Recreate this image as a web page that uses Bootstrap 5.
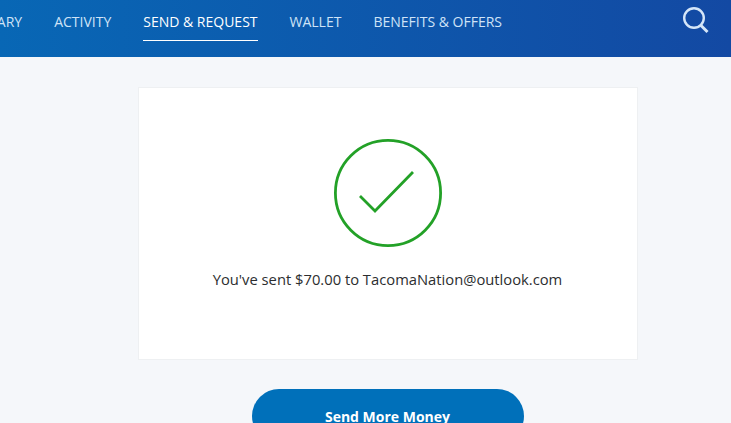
<!DOCTYPE html>
<html lang="en">
<head>
    <meta charset="UTF-8">
    <meta name="viewport" content="width=device-width, initial-scale=1.0">
    <title>Send Money</title>
    <link href="https://cdn.jsdelivr.net/npm/bootstrap@5.3.0/dist/css/bootstrap.min.css" rel="stylesheet">
    <style>
        html, body { height: 100%; overflow: hidden; }
        body {
            background-color: #f5f7fa;
            font-family: "Open Sans", "Noto Sans", sans-serif;
            color: #2c2e2f;
        }
        .top-bar {
            height: 57px;
            padding-right: 22px;
            background: linear-gradient(90deg, #0867b5 0%, #1349a3 100%);
            overflow: hidden;
        }
        .top-links { gap: 32px; margin-right: 181px; flex-shrink: 0; }
        .top-link {
            display: block;
            height: 41px;
            padding-top: 13px;
            font-size: 14px;
            line-height: 18px;
            color: #cfe3f7;
            text-decoration: none;
            white-space: nowrap;
        }
        .top-link.current { color: #fff; border-bottom: 1px solid #fff; }
        .search-icon { margin-top: 4px; flex-shrink: 0; }
        .page-body { padding-left: 44px; }
        .result-panel {
            width: 500px;
            height: 273px;
            margin: 30px auto 0;
            padding-top: 51px;
            background: #fff;
            border: 1px solid #eef0f2;
        }
        .result-text { margin: 21px 0 0; font-size: 14.75px; line-height: 22px; }
        .more-btn {
            width: 272px;
            height: 54px;
            margin: 29px auto 0;
            border-radius: 27px;
            background: #0070ba;
            color: #fff;
            font-size: 14px;
            font-weight: 700;
        }
        .more-btn:hover { background: #005ea6; color: #fff; }
    </style>
</head>
<body>
    <header class="top-bar d-flex justify-content-end align-items-start">
        <nav class="top-links d-flex">
            <a class="top-link" href="#">SUMMARY</a>
            <a class="top-link" href="#">ACTIVITY</a>
            <a class="top-link current" href="#">SEND &amp; REQUEST</a>
            <a class="top-link" href="#">WALLET</a>
            <a class="top-link" href="#">BENEFITS &amp; OFFERS</a>
        </nav>
        <svg class="search-icon" width="26" height="30" viewBox="0 0 26 30" fill="none" stroke="#d5e6f8">
            <circle cx="11" cy="14" r="9.8" stroke-width="2.4"/>
            <path d="M17.5 21 L24.5 28" stroke-width="3"/>
        </svg>
    </header>
    <main class="page-body">
        <div class="result-panel text-center">
            <svg class="d-block mx-auto" width="108" height="108" viewBox="0 0 108 108" fill="none" stroke="#23a127" stroke-width="2.8">
                <circle cx="54" cy="54" r="52.6"/>
                <path d="M26 57 L41 72 L79 33"/>
            </svg>
            <p class="result-text">You've sent $70.00 to TacomaNation@outlook.com</p>
        </div>
        <button type="button" class="btn more-btn d-block">Send More Money</button>
    </main>
    <script src="https://cdn.jsdelivr.net/npm/bootstrap@5.3.0/dist/js/bootstrap.bundle.min.js"></script>
</body>
</html>
